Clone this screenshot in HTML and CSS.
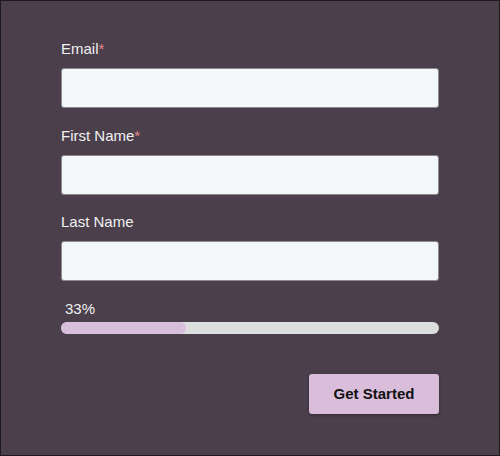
FILE: index.html
```html
<!DOCTYPE html>
<html>
<head>
<meta charset="utf-8">
<link rel="stylesheet" href="styles.css">
</head>
<body>
<div class="frame">
  <form class="form">
    <div class="field">
      <label class="label">Email<span class="req">*</span></label>
      <input class="input" type="text">
    </div>
    <div class="field">
      <label class="label">First Name<span class="req">*</span></label>
      <input class="input" type="text">
    </div>
    <div class="field">
      <label class="label">Last Name</label>
      <input class="input" type="text">
    </div>
    <div class="progress">
      <div class="progress-label">33%</div>
      <div class="track"><div class="fill" style="width:33%"></div></div>
    </div>
    <div class="actions">
      <button class="btn" type="button">Get Started</button>
    </div>
  </form>
</div>
</body>
</html>
```

FILE: styles.css
```css
* { box-sizing: border-box; }
html, body { margin: 0; padding: 0; }
body {
  width: 500px;
  height: 456px;
  font-family: "Liberation Sans", Arial, sans-serif;
}
.frame {
  width: 500px;
  height: 456px;
  background: #4a3f4b;
  border: 1px solid #1c1c1c;
  padding: 39px 60px 0 60px;
}
.form {
  display: flex;
  flex-direction: column;
}
.field {
  display: flex;
  flex-direction: column;
  margin-bottom: 18.5px;
}
.label {
  font-size: 15px;
  line-height: 17px;
  color: #f1f1f1;
  margin-bottom: 11px;
}
.req { color: #e0898c; }
.input {
  height: 40px;
  width: 100%;
  background: #f3f7fa;
  border: 1px solid #8b8b8b;
  border-radius: 3px;
  font: inherit;
  margin: 0;
}
.progress { margin-top: 0.5px; }
.progress-label {
  font-size: 15px;
  line-height: 17px;
  color: #f1f1f1;
  padding-left: 4px;
  margin-bottom: 5px;
}
.track {
  height: 12px;
  background: #dcdddf;
  border-radius: 6px;
  overflow: hidden;
}
.fill {
  height: 100%;
  background: #d9bfdc;
  border-radius: 6px;
}
.actions {
  display: flex;
  justify-content: flex-end;
  margin-top: 40px;
}
.btn {
  width: 130px;
  height: 40px;
  background: #d9bddb;
  border: none;
  border-radius: 3px;
  font-family: "Liberation Sans", Arial, sans-serif;
  font-size: 15px;
  font-weight: bold;
  color: #111;
  box-shadow: 0 1px 3px rgba(0,0,0,0.35);
  padding: 0 0 1px 0;
}
```
